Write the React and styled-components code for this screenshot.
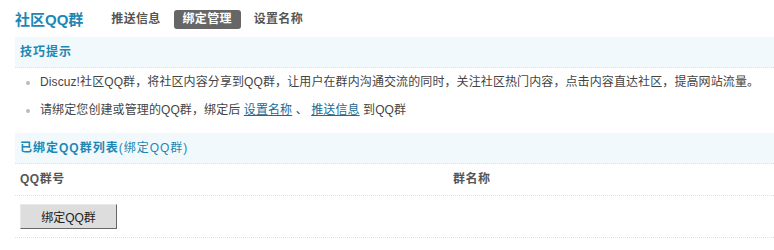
import React from 'react';
import styled, { createGlobalStyle } from 'styled-components';

const GlobalStyle = createGlobalStyle`
  body {
    margin: 0;
    background: #fff;
    font: 12px 'Liberation Sans', 'Noto Sans CJK SC', sans-serif;
    color: #444;
  }
`;

const Page = styled.div`
  padding-left: 15px;
`;

const TopBar = styled.div`
  display: flex;
  align-items: center;
  height: 37px;
`;

const Title = styled.h3`
  margin: 0 19px 0 0;
  font-size: 15px;
  font-weight: bold;
  color: #1d87b3;
`;

const Tabs = styled.div`
  display: flex;
  gap: 4px;
`;

const Tab = styled.span`
  display: inline-block;
  height: 19px;
  line-height: 19px;
  padding: 0 9px;
  border-radius: 3px;
  font-weight: bold;
  letter-spacing: 0.3px;
  color: ${props => props.active ? '#fff' : '#555'};
  background: ${props => props.active ? '#666' : 'transparent'};
  margin-top: 1px;
`;

const Band = styled.div`
  height: 30px;
  line-height: 30px;
  padding-left: 5px;
  background: #f2f9fd;
  border-bottom: 1px dotted #cfe3f0;
  color: #1d87b3;
  letter-spacing: 1px;
  font-weight: ${props => props.bold ? 'bold' : 'normal'};
`;

const Light = styled.span`
  font-weight: normal;
`;

const TipList = styled.ul`
  list-style: none;
  margin: 0 0 9px;
  padding: 0;
`;

const Tip = styled.li`
  position: relative;
  height: 28px;
  line-height: 28px;
  padding-left: 25px;
  color: #444;
  letter-spacing: 0.1px;

  &::before {
    content: '';
    position: absolute;
    left: 11px;
    top: 13px;
    width: 4px;
    height: 4px;
    border-radius: 50%;
    background: #bbb;
  }
`;

const Link = styled.a`
  color: #24698f;
  text-decoration: underline;
  cursor: pointer;
`;

const Row = styled.div`
  display: grid;
  grid-template-columns: 433px 1fr;
  border-bottom: 1px dotted #cfe3f0;
  padding: ${props => props.pad || '0'};
`;

const HeadCell = styled.div`
  height: 31px;
  line-height: 31px;
  padding-left: 5px;
  font-weight: bold;
  letter-spacing: 0.5px;
  color: #555;
`;

const Cell = styled.div`
  padding-left: 5px;
`;

const Button = styled.button`
  width: 97px;
  height: 25px;
  padding: 0;
  background: #ddd;
  border: 1px solid;
  border-color: #e8e8e8 #666 #666 #e8e8e8;
  font: 12px 'Liberation Sans', 'Noto Sans CJK SC', sans-serif;
  color: #222;
  cursor: pointer;
`;

const App = () => {
  return (
    <Page>
      <GlobalStyle />
      <TopBar>
        <Title>社区QQ群</Title>
        <Tabs>
          <Tab>推送信息</Tab>
          <Tab active>绑定管理</Tab>
          <Tab>设置名称</Tab>
        </Tabs>
      </TopBar>

      <Band bold>技巧提示</Band>
      <TipList>
        <Tip>Discuz!社区QQ群，将社区内容分享到QQ群，让用户在群内沟通交流的同时，关注社区热门内容，点击内容直达社区，提高网站流量。</Tip>
        <Tip>请绑定您创建或管理的QQ群，绑定后 <Link>设置名称</Link> 、 <Link>推送信息</Link> 到QQ群</Tip>
      </TipList>

      <Band bold>已绑定QQ群列表<Light>(绑定QQ群)</Light></Band>
      <Row>
        <HeadCell>QQ群号</HeadCell>
        <HeadCell>群名称</HeadCell>
      </Row>
      <Row pad='8px 0 8px'>
        <Cell>
          <Button>绑定QQ群</Button>
        </Cell>
      </Row>
    </Page>
  );
};

export default App;
